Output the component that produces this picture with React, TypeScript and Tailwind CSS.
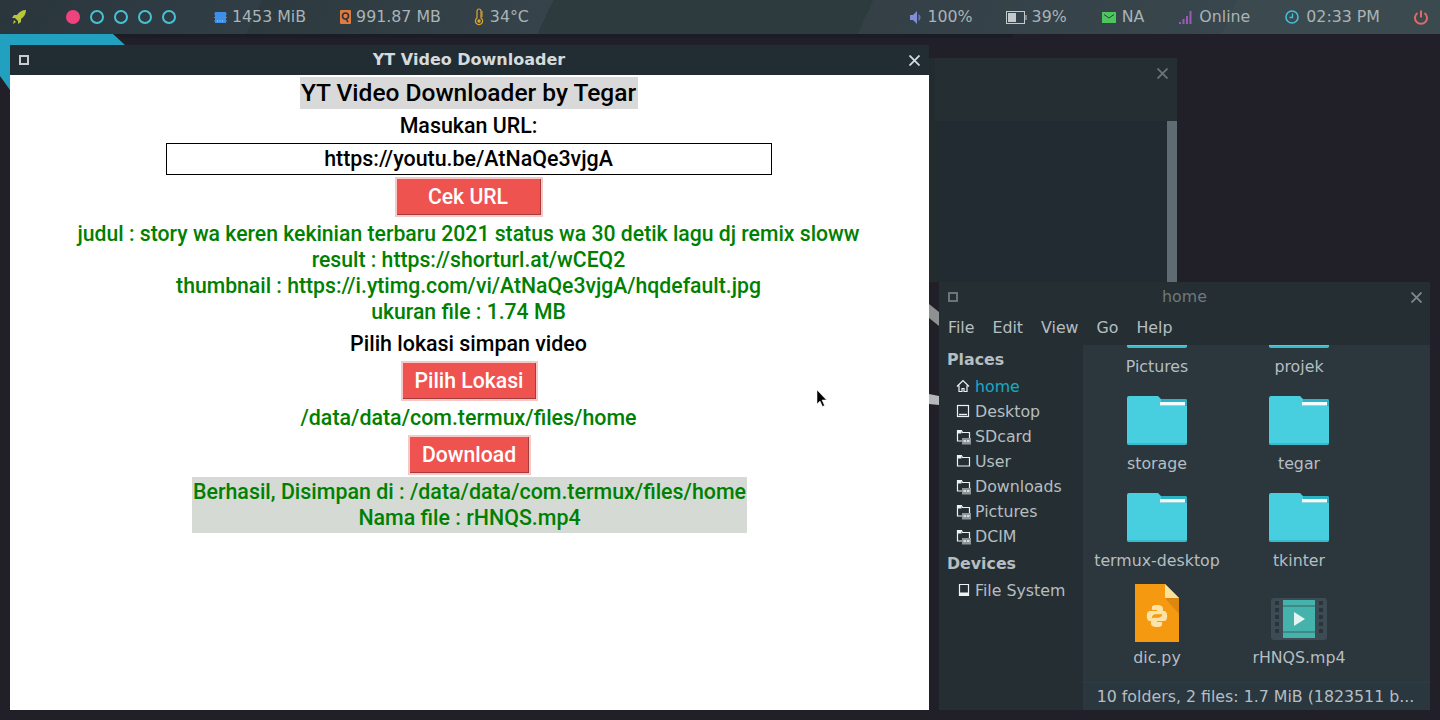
import React from "react";

const panelStripes =
  "bg-[linear-gradient(115deg,#2a363c_0%,#323e46_18%,#2c3a3f_18%,#36434a_38%,#2d3a3e_38%,#2d3a3e_60%,#343f46_60%,#38474d_85%,#3c4a50_85%,#3b4a4e_100%)]";

const Folder = () => (
  <svg width="60" height="50" viewBox="0 0 60 50" className="mb-[2px]">
    <path d="M2 0h29l3 3h24a2 2 0 0 1 2 2v42a2 2 0 0 1-2 2H2a2 2 0 0 1-2-2V2a2 2 0 0 1 2-2z" fill="#47cfdf" />
    <path d="M34 3h24a2 2 0 0 1 2 2v5H34z" fill="#1fa6b8" opacity="0.7" />
    <rect x="33" y="6" width="25" height="3.500" fill="#f4fbfc" />
    <path d="M0 48a2 2 0 0 0 2 1h56a2 2 0 0 0 2-1v-1H0z" fill="#2aa9bb" opacity="0.5" />
  </svg>
);

const PyFile = () => (
  <svg width="44" height="58" viewBox="0 0 44 58">
    <path d="M0 0h30l14 14v44H0z" fill="#f59a10" />
    <path d="M30 14h14v16z" fill="#c97c10" opacity="0.6" />
    <path d="M30 0l14 14H30z" fill="#fde09a" />
    <g transform="translate(22 32) scale(0.85) translate(-22 -32)">
      <path d="M22 19c-6 0-6 2-6 4v2h6v1h-8c-3 0-4 3-4 6s1 6 4 6h2v-4c0-2 2-4 4-4h6c2 0 3-1 3-3v-4c0-2-2-4-7-4z" fill="#fde3a8" />
      <path d="M22 45c6 0 6-2 6-4v-2h-6v-1h8c3 0 4-3 4-6s-1-6-4-6h-2v4c0 2-2 4-4 4h-6c-2 0-3 1-3 3v4c0 2 2 4 7 4z" fill="#fde3a8" />
    </g>
  </svg>
);

const VideoFile = () => (
  <svg width="56" height="42" viewBox="0 0 56 42" className="mb-[2px]">
    <rect width="56" height="42" rx="3" fill="#3d4b55" />
    <rect x="12" y="2" width="32" height="38" fill="#45b3ab" />
    <rect x="12" y="7" width="32" height="2" fill="#3d8a88" />
    <rect x="12" y="33" width="32" height="2" fill="#3d8a88" />
    <path d="M23 14l11 7-11 7z" fill="#e3f4f2" />
    {[3, 10, 17, 24, 31].map((y) => (
      <g key={y} fill="#2a343b">
        <rect x="4" y={y} width="4" height="4" />
        <rect x="48" y={y} width="4" height="4" />
      </g>
    ))}
  </svg>
);

const PlaceIcon = ({ kind }: { kind: string }) => (
  <svg width="17" height="17" viewBox="0 0 17 17" fill="none" stroke="#eef1f1" strokeWidth="1.200" className="shrink-0">
    {kind === "home" && <path d="M1 8.500L7 2.500l6 6M3 7.500v6h3v-3h2v3h3v-6" />}
    {kind === "desktop" && (
      <>
        <rect x="1.500" y="2.500" width="11" height="11" />
        <path d="M3 11.500h8" strokeWidth="1.400" />
      </>
    )}
    {(kind === "folder" || kind === "link") && (
      <>
        <path d="M1.500 2.500v10.500h12v-8.500h-7l-1-2z" />
        <path d="M1.500 3h4v2.500h-4z" fill="#eef1f1" stroke="none" />
      </>
    )}
    {kind === "link" && (
      <>
        <rect x="6" y="10" width="9" height="6.500" fill="#8d9699" stroke="none" />
        <path d="M7.500 13h2.500M11 13h2.500" stroke="#eef1f1" strokeWidth="1.500" />
      </>
    )}
    {kind === "drive" && (
      <>
        <path d="M3.500 2.500h9v11h-9z" />
        <rect x="3" y="10.500" width="10" height="3.500" fill="#eef1f1" stroke="none" />
      </>
    )}
  </svg>
);

const places = [
  { name: "home", icon: "home" },
  { name: "Desktop", icon: "desktop" },
  { name: "SDcard", icon: "link" },
  { name: "User", icon: "folder" },
  { name: "Downloads", icon: "link" },
  { name: "Pictures", icon: "link" },
  { name: "DCIM", icon: "link" },
];

const files = [
  { name: "Pictures", icon: <Folder /> },
  { name: "projek", icon: <Folder /> },
  { name: "storage", icon: <Folder /> },
  { name: "tegar", icon: <Folder /> },
  { name: "termux-desktop", icon: <Folder /> },
  { name: "tkinter", icon: <Folder /> },
  { name: "dic.py", icon: <PyFile /> },
  { name: "rHNQS.mp4", icon: <VideoFile /> },
];

const RedButton = ({ label, width }: { label: string; width: string }) => (
  <div className={`border-2 border-[#f5c9c8] ${width}`}>
    <div className="h-[36px] flex items-center justify-center bg-[#ef5350] border-r border-b border-[#a83b39] text-white text-[21.2px]">
      {label}
    </div>
  </div>
);

const TopPanel = () => (
  <div className={`h-[34px] flex items-center text-[15.8px] text-[#aab3b6] ${panelStripes}`}>
    {/* launcher + workspaces */}
    <svg width="16" height="16" viewBox="0 0 16 16" className="ml-[11px]">
      <path d="M15 1c-4 0-7 2-9 5H3L1 9h3l3 3v3l3-2v-3c3-2 5-5 5-9z" fill="#b9c63c" />
      <path d="M3 11l2 2-3 2z" fill="#b9c63c" />
    </svg>
    <div className="ml-[39px] w-[14px] h-[14px] rounded-full bg-[#f0437d]" />
    {[0, 1, 2, 3].map((i) => (
      <div key={i} className="ml-[10px] w-[14px] h-[14px] rounded-full border-2 border-[#45c2d6]" />
    ))}
    {/* system stats */}
    <svg width="13" height="13" viewBox="0 0 13 13" className="ml-[38px]">
      <rect x="1" y="1" width="11" height="11" fill="#3d8fe8" />
      <path d="M0 3h13M0 6.500h13M0 10h13" stroke="#3d8fe8" strokeWidth="1" />
      <path d="M3 10h1M5.500 10h1M8 10h1" stroke="#bcdcf8" />
    </svg>
    <span className="ml-[5px]">1453 MiB</span>
    <svg width="11" height="14" viewBox="0 0 11 14" className="ml-[34px]">
      <rect width="11" height="14" rx="1" fill="#de7b42" />
      <circle cx="5.500" cy="6" r="3" fill="none" stroke="#33302e" strokeWidth="1.600" />
      <path d="M6 9l2 3" stroke="#33302e" strokeWidth="1.400" />
    </svg>
    <span className="ml-[5px]">991.87 MB</span>
    <svg width="10" height="18" viewBox="0 0 10 18" className="ml-[33px]" fill="none">
      <path d="M3 10V3a2 2 0 0 1 4 0v7a3.600 3.600 0 1 1-4 0z" stroke="#e2a62f" strokeWidth="1.200" />
      <circle cx="5" cy="13" r="1.700" fill="#e2a62f" />
      <path d="M7 4h2M7 6h2M7 8h2" stroke="#e2a62f" />
    </svg>
    <span className="ml-[6px]">34°C</span>

    <div className="ml-auto flex items-center">
      <svg width="13" height="13" viewBox="0 0 13 13">
        <path d="M0 4h3l4-4v13l-4-4H0z" fill="#7f8ed6" />
        <path d="M8.500 3a4 4 0 0 1 0 7z" fill="#7f8ed6" opacity="0.7" />
      </svg>
      <span className="ml-[4px]">100%</span>
      <svg width="21" height="13" viewBox="0 0 21 13" fill="none" className="ml-[33px]">
        <rect x="0.500" y="0.500" width="18" height="12" stroke="#c4cacc" />
        <rect x="2" y="2" width="8" height="9" fill="#c4cacc" />
        <path d="M20 4v5" stroke="#c4cacc" />
      </svg>
      <span className="ml-[5px]">39%</span>
      <svg width="14" height="11" viewBox="0 0 14 11" className="ml-[35px]">
        <rect width="14" height="11" fill="#4dc65e" />
        <path d="M2 2.500l5 3.500 5-3.500" stroke="#2f3e3a" strokeWidth="1" fill="none" />
      </svg>
      <span className="ml-[6px]">NA</span>
      <svg width="13" height="13" viewBox="0 0 13 13" className="ml-[35px]">
        <rect x="0" y="11" width="2" height="2" fill="#9b5bb5" />
        <rect x="3.500" y="8" width="2" height="5" fill="#9b5bb5" />
        <rect x="7" y="5" width="2" height="8" fill="#9b5bb5" />
        <rect x="10.500" y="0" width="2" height="13" fill="#9b5bb5" />
      </svg>
      <span className="ml-[7px]">Online</span>
      <svg width="14" height="14" viewBox="0 0 14 14" fill="none" className="ml-[35px]">
        <circle cx="7" cy="7" r="6" stroke="#45bcd8" strokeWidth="1.600" />
        <path d="M7.500 3.500V7.500H4.500" stroke="#45bcd8" strokeWidth="1.300" />
      </svg>
      <span className="ml-[7px]">02:33 PM</span>
      <svg width="14" height="15" viewBox="0 0 14 15" fill="none" className="ml-[34px] mr-[12px]">
        <path d="M7 0.500v7" stroke="#e06a68" strokeWidth="2" />
        <path d="M3.500 3a6 6 0 1 0 7 0" stroke="#e06a68" strokeWidth="2" />
      </svg>
    </div>
  </div>
);

const DownloaderWindow = () => (
  <div className="absolute left-[10px] top-[45px] w-[919px] h-[665px] flex flex-col">
    <div className="h-[30px] shrink-0 bg-[#222d33] flex items-center justify-between pl-[9px] pr-[10px] font-['DejaVu_Sans',sans-serif]">
      <div className="w-[10px] h-[10px] border-2 border-[#c8ccce]" />
      <span className="font-bold text-[16px] text-[#d5dadc]">YT Video Downloader</span>
      <svg width="11" height="11" viewBox="0 0 11 11" stroke="#d5dadc" strokeWidth="1.800" className="mr-[-1px]">
        <path d="M0.500 0.500l10 10M10.500 0.500l-10 10" />
      </svg>
    </div>
    <div className="flex-1 bg-white flex flex-col items-center pr-[2px] font-['Roboto',sans-serif] font-medium text-[21.4px] leading-[26px] text-black">
      <div className="mt-[2px] h-[32px] w-[338px] bg-[#d9d9d9] flex items-center justify-center text-[24.5px]">
        YT Video Downloader by Tegar
      </div>
      <div className="mt-[4px]">Masukan URL:</div>
      <div className="mt-[4px] w-[606px] h-[32px] border border-black flex items-center justify-center">
        https://youtu.be/AtNaQe3vjgA
      </div>
      <div className="mt-[2px]">
        <RedButton label="Cek URL" width="w-[148px]" />
      </div>
      <div className="mt-[4px] text-[#008000] text-[21.2px] text-center whitespace-nowrap">
        <div>judul : story wa keren kekinian terbaru 2021 status wa 30 detik lagu dj remix sloww</div>
        <div>result : https://shorturl.at/wCEQ2</div>
        <div>thumbnail : https://i.ytimg.com/vi/AtNaQe3vjgA/hqdefault.jpg</div>
        <div>ukuran file : 1.74 MB</div>
      </div>
      <div className="mt-[6px]">Pilih lokasi simpan video</div>
      <div className="mt-[4px] ml-[2px]">
        <RedButton label="Pilih Lokasi" width="w-[137px]" />
      </div>
      <div className="mt-[4px] text-[#008000]">/data/data/com.termux/files/home</div>
      <div className="mt-[4px] ml-[2px]">
        <RedButton label="Download" width="w-[123px]" />
      </div>
      <div className="mt-[2px] ml-[2px] w-[555px] py-[2px] bg-[#d6dad5] text-[#008000] text-center whitespace-nowrap">
        <div>Berhasil, Disimpan di : /data/data/com.termux/files/home</div>
        <div>Nama file : rHNQS.mp4</div>
      </div>
    </div>
  </div>
);

const FileManager = () => (
  <div className="absolute left-[939px] top-[282px] w-[491px] h-[428px] flex flex-col bg-[#252f33] font-['DejaVu_Sans',sans-serif] text-[15.8px] text-[#b6bec1]">
    <div className="h-[30px] shrink-0 flex items-center justify-between px-[9px]">
      <div className="w-[10px] h-[10px] border-2 border-[#6b7477]" />
      <span className="text-[#6f787b]">home</span>
      <svg width="11" height="11" viewBox="0 0 11 11" stroke="#7f888b" strokeWidth="1.800" className="mr-[-1px]">
        <path d="M0.500 0.500l10 10M10.500 0.500l-10 10" />
      </svg>
    </div>
    <div className="h-[33px] shrink-0 flex items-center gap-[18px] pl-[9px] pb-[2px]">
      {["File", "Edit", "View", "Go", "Help"].map((m) => (
        <span key={m}>{m}</span>
      ))}
    </div>
    <div className="flex-1 flex min-h-0">
      <div className="w-[144px] shrink-0 pl-[8px] pt-[1px]">
        <div className="font-bold h-[28px] flex items-center">Places</div>
        {places.map((p, i) => (
          <div key={p.name} className="h-[25px] flex items-center pl-[9px] gap-[2px]">
            <PlaceIcon kind={p.icon} />
            <span className={i === 0 ? "text-[#18a9c4]" : ""}>{p.name}</span>
          </div>
        ))}
        <div className="font-bold h-[29px] flex items-center">Devices</div>
        <div className="h-[25px] flex items-center pl-[9px] gap-[2px]">
          <PlaceIcon kind="drive" />
          <span>File System</span>
        </div>
      </div>
      <div className="flex-1 flex flex-col min-w-0 bg-[#2b363d]">
        <div className="flex-1 overflow-hidden min-h-0">
          <div className="grid grid-cols-[142px_142px] pl-[3px] mt-[-52px]">
            {files.map((f) => (
              <div key={f.name} className="h-[97px] flex flex-col items-center">
                <div className="h-[58px] flex items-end justify-center">{f.icon}</div>
                <div className="mt-[6px] leading-[20px] whitespace-nowrap">{f.name}</div>
              </div>
            ))}
          </div>
        </div>
        <div className="h-[28px] shrink-0 bg-[#2a373f] border-t border-[#2f3c44] flex items-center justify-center pr-[2px] whitespace-nowrap">
          10 folders, 2 files: 1.7 MiB (1823511 b...
        </div>
      </div>
    </div>
  </div>
);

const App: React.FC = () => {
  return (
    <div className="relative w-[1440px] h-[720px] overflow-hidden bg-[#211f28]">
      {/* wallpaper slivers */}
      <svg width="1440" height="720" viewBox="0 0 1440 720" className="absolute inset-0">
        <path d="M0 34h113l12 11H10v45L0 76z" fill="#22a0bf" />
        <path d="M113 34h900v4H125z" fill="#1b1d24" />
        <path d="M929 394l10 2v9l-10-1z" fill="#b4b8b8" />
        <path d="M929 304l10 8v14l-10-8z" fill="#8d9191" />
      </svg>

      {/* window behind the others */}
      <div className="absolute left-[929px] top-[58px] w-[248px] h-[224px] flex flex-col bg-[#222b2e]">
        <div className="h-[63px] shrink-0 ml-[6px] bg-[#252e32] flex justify-end pt-[10px] pr-[9px]">
          <svg width="11" height="11" viewBox="0 0 11 11" stroke="#6b7477" strokeWidth="1.800">
            <path d="M0.500 0.500l10 10M10.500 0.500l-10 10" />
          </svg>
        </div>
        <div className="flex-1 flex pl-[10px]">
          <div className="flex-1 bg-[#222a32]" />
          <div className="w-[10px] bg-[#5f6b72]" />
        </div>
      </div>

      <div className="absolute inset-x-0 top-0 font-['DejaVu_Sans',sans-serif]">
        <TopPanel />
      </div>

      <DownloaderWindow />
      <FileManager />

      {/* mouse pointer */}
      <svg width="11" height="17" viewBox="0 0 11 17" className="absolute left-[816px] top-[390px]">
        <path d="M1 0v14l3-3 2.500 5.500 2-1L6 10h4.500z" fill="#000" stroke="#fff" strokeWidth="0.500" />
      </svg>
    </div>
  );
};

export default App;
